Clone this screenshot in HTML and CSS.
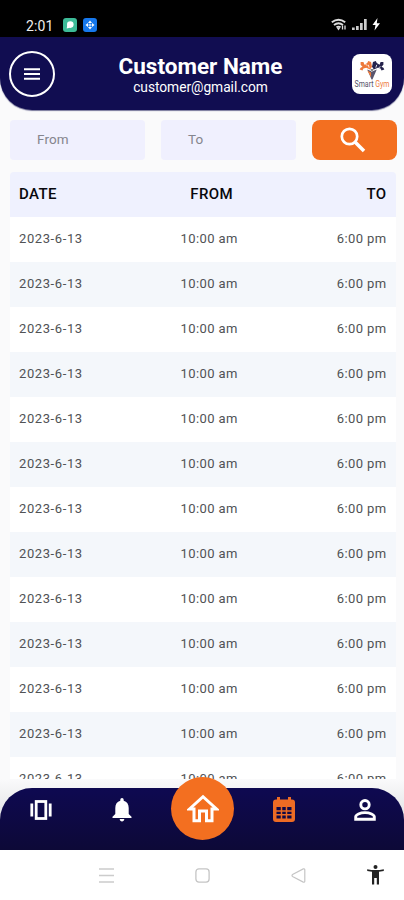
FILE: index.html
```html
<!DOCTYPE html>
<html lang="en">
<head>
<meta charset="utf-8">
<title>Attendance</title>
<link rel="stylesheet" href="styles.css">
</head>
<body>
<div class="phone">
  <div class="status">
    <span class="clock">2:01</span>
    <svg class="chip" viewBox="0 0 14 14"><rect width="14" height="14" rx="3" fill="#3dbb98"/><circle cx="7.3" cy="6.6" r="3.3" fill="#fff"/><path d="M4.3 7l-.6 3.4L7 9.8z" fill="#fff"/></svg>
    <svg class="chip" viewBox="0 0 14 14"><rect width="14" height="14" rx="3" fill="#1678ed"/><path d="M7 2.500L9 5H5zM7 11.500L5 9h4zM2.500 7L5 5v4zM11.500 7L9 9V5z" fill="#fff"/><circle cx="7" cy="7" r="1.600" fill="#a9d0ff"/></svg>
    <svg class="signals" viewBox="0 0 50 14">
      <g fill="none" stroke="#ddd" stroke-width="1.900"><path d="M.8 4.300Q7.500-.9 14.200 4.300M3 7Q7.500 3.500 12 7M5.500 9.300Q7.500 8 9.500 9.300"/></g>
      <path d="M5.500 9.500h4l-2 3z" fill="#ddd"/><path d="M11.500 7.500v4M14 7.500v4" stroke="#ddd" stroke-width="1.300"/>
      <path d="M21 9.500h2.700V12H21zM25 8h2.700v4H25zM29 5h2.700v7H29zM33 1h2.700v11H33z" fill="#ccc"/>
      <path d="M46.500 0L41.500 7h3l-1 5.500L49 5.300h-3.200z" fill="#fff"/>
    </svg>
  </div>
  <header class="header">
    <button class="menu" aria-label="Menu"><svg viewBox="0 0 16 12"><path d="M0 1.200h16M0 6h16M0 10.800h16" stroke="#fff" stroke-width="2"/></svg></button>
    <div class="customer"><h1>Customer Name</h1><p>customer@gmail.com</p></div>
    <div class="logo">
      <svg viewBox="0 0 30 20">
        <path d="M10 9l5 2 5-2-4.500 10.500h-1z" fill="#59566e"/>
        <path d="M3 1h3l1 3 3-2 1-2 3 1 1 5-2 3-4-2-3 1-1 2-3-1 1-2 2-1-2-2zM10 10l4 2v5z" fill="#ee7a3b"/>
        <path d="M27 1h-3l-1 3-3-2-1-2-3 1-1 5 2 3 4-2 3 1 1 2 3-1-1-2-2-1 2-2z" fill="#25234c"/>
        <path d="M8 3l2 2M11 4l1 3M20 4l-1 3M22 7l2-1M13 9l2 2 2-2" stroke="#fff" stroke-width=".9"/>
      </svg>
      <div class="brand">Smart <b>Gym</b></div>
    </div>
  </header>
  <main class="content">
    <form class="search">
      <div class="field">From</div><div class="field">To</div>
      <button type="button" class="go" aria-label="Search"><svg viewBox="0 0 26 26"><circle cx="9.500" cy="9.500" r="7.700" fill="none" stroke="#fff" stroke-width="2.700"/><path d="M15 15l9 9" stroke="#fff" stroke-width="3.600"/></svg></button>
    </form>
    <div class="table">
      <div class="row head"><span>DATE</span><span>FROM</span><span>TO</span></div>
      <div class="row"><span>2023-6-13</span><span>10:00 am</span><span>6:00 pm</span></div>
      <div class="row"><span>2023-6-13</span><span>10:00 am</span><span>6:00 pm</span></div>
      <div class="row"><span>2023-6-13</span><span>10:00 am</span><span>6:00 pm</span></div>
      <div class="row"><span>2023-6-13</span><span>10:00 am</span><span>6:00 pm</span></div>
      <div class="row"><span>2023-6-13</span><span>10:00 am</span><span>6:00 pm</span></div>
      <div class="row"><span>2023-6-13</span><span>10:00 am</span><span>6:00 pm</span></div>
      <div class="row"><span>2023-6-13</span><span>10:00 am</span><span>6:00 pm</span></div>
      <div class="row"><span>2023-6-13</span><span>10:00 am</span><span>6:00 pm</span></div>
      <div class="row"><span>2023-6-13</span><span>10:00 am</span><span>6:00 pm</span></div>
      <div class="row"><span>2023-6-13</span><span>10:00 am</span><span>6:00 pm</span></div>
      <div class="row"><span>2023-6-13</span><span>10:00 am</span><span>6:00 pm</span></div>
      <div class="row"><span>2023-6-13</span><span>10:00 am</span><span>6:00 pm</span></div>
      <div class="row"><span>2023-6-13</span><span>10:00 am</span><span>6:00 pm</span></div>
    </div>
  </main>
  <nav class="tabs">
    <a class="tab"><svg width="22" height="20" viewBox="0 0 22 20"><rect x="6.200" y="1.500" width="9.600" height="17" fill="none" stroke="#fff" stroke-width="2.800"/><path d="M1.800 3.500v13M20.200 3.500v13" stroke="#fff" stroke-width="2.800"/></svg></a>
    <a class="tab"><svg width="20" height="24" viewBox="0 0 20 24"><path d="M10 0c1 0 1.700.8 1.700 2v.8c3.300.8 5 3.700 5 7.200v6l2.800 2.700V20H.5v-1.300L3.300 16v-6c0-3.500 1.700-6.400 5-7.200V2c0-1.200.7-2 1.700-2zM7.700 21h4.600c0 1.400-1 2.500-2.300 2.500S7.700 22.400 7.700 21z" fill="#fff"/></svg></a>
    <a class="tab home"><svg width="32" height="30" viewBox="0 0 32 30"><path d="M2.500 15L16 2.700 29.500 15H25v11.800h-5.500V17h-7v9.800H7V15z" fill="none" stroke="#fff" stroke-width="3"/></svg></a>
    <a class="tab"><svg width="22" height="25" viewBox="0 0 22 25"><path fill-rule="evenodd" d="M3 2.500h1V0h3v2.500h8V0h3v2.500h1a3 3 0 0 1 3 3V22a3 3 0 0 1-3 3H3a3 3 0 0 1-3-3V5.500a3 3 0 0 1 3-3zM3.500 10v11.500h15V10z" fill="#ed6b24"/><path d="M8.500 10v12M13.500 10v12M3 13.900h16M3 17.800h16" stroke="#ed6b24" stroke-width="1.500"/></svg></a>
    <a class="tab"><svg width="22" height="22" viewBox="0 0 22 22"><g fill="none" stroke="#fff" stroke-width="2.900"><circle cx="11" cy="5.700" r="4.200"/><path d="M1.700 20.300v-2.500c0-2 4.300-4.200 9.300-4.200s9.300 2.200 9.300 4.200v2.500z"/></g></svg></a>
  </nav>
  <div class="system">
    <span><svg width="15" height="15" viewBox="0 0 15 15"><path d="M0 1h15M0 7.500h15M0 14h15" stroke="#ccc" stroke-width="1.500"/></svg></span>
    <span><svg width="15" height="15" viewBox="0 0 15 15"><rect x=".9" y=".9" width="13.200" height="13.200" rx="3" fill="none" stroke="#c5c5c5" stroke-width="1.300"/></svg></span>
    <span><svg width="15" height="15" viewBox="0 0 15 15"><path d="M1 7.500Q1 6.800 2 6.200L12.300.9q1.500-.5 1.500 1v11.200q0 1.500-1.500 1L2 8.800Q1 8.200 1 7.500z" fill="none" stroke="#c5c5c5" stroke-width="1.200"/></svg></span>
    <span><svg width="17" height="20" viewBox="0 0 17 20"><circle cx="8.500" cy="2" r="2" fill="#222"/><path d="M.2 4.200Q8.500 6 16.800 4.200v1.700l-4.800.8V19.500h-2.200V13H7.200v6.500H5V6.700L.2 5.900z" fill="#222"/></svg></span>
  </div>
</div>
</body>
</html>
```
FILE: styles.css
```css
* { box-sizing: border-box; }
body { margin: 0; font-family: Roboto, "Liberation Sans", sans-serif; }
h1, p { margin: 0; }
button { padding: 0; border: 0; }
svg { display: block; }
.phone { width: 404px; height: 900px; overflow: hidden; display: flex; flex-direction: column; background: #fafafb; }
.status { flex: 0 0 37px; display: flex; align-items: center; padding: 13px 23px 0 26px; background: #000; color: #eee; }
.clock { width: 37px; padding-top: 1px; font-size: 14px; line-height: 16px; letter-spacing: .1px; }
.chip { width: 14px; height: 14px; margin-right: 6px; }
.signals { width: 50px; height: 14px; margin-left: auto; }
.header { flex: 0 0 73px; display: flex; align-items: center; justify-content: space-between; padding: 0 12px 0 9px; background: #110d51; border-radius: 0 0 32px 32px; box-shadow: 0 1px 1px #77779b; }
.menu { width: 46px; height: 46px; display: grid; place-items: center; background: none; border: 2px solid #fff; border-radius: 50%; }
.menu svg { width: 16px; height: 12px; }
.customer { padding-top: 2px; color: #fff; text-align: center; white-space: nowrap; transform: translateX(-3px); }
.customer h1 { font-size: 22.5px; line-height: 25px; font-weight: 700; }
.customer p { font-size: 13.8px; line-height: 16px; letter-spacing: -.05px; }
.logo { width: 40px; height: 40px; padding-top: 7px; border-radius: 8px; background: #fff; overflow: hidden; }
.logo svg { width: 30px; height: 19px; margin: 0 auto; }
.brand { font-size: 7px; line-height: 8px; text-align: center; color: #55536a; white-space: nowrap; transform: scaleY(1.25); }
.brand b { font-weight: 400; color: #ee7a3b; }
.content { flex: 0 0 669px; height: 669px; padding: 10px 8px 0 10px; overflow: hidden; }
.search { display: grid; grid-template-columns: 135px 135px 85px; column-gap: 16px; height: 40px; margin-bottom: 12px; }
.field { padding-left: 27px; border-radius: 4px; background: #f0f0fe; color: #85858d; font-size: 13.5px; line-height: 39px; letter-spacing: .1px; }
.go { display: grid; place-items: center; border-radius: 8px; background: #f36f20; }
.go svg { width: 26px; height: 26px; margin-left: -3px; margin-top: -1px; }
.table { border-radius: 4px; overflow: hidden; }
.row { display: grid; grid-template-columns: 1fr 1fr 1fr; height: 45px; padding: 0 9.500px 2px 9px; align-items: center; background: #fff; color: #505255; font-size: 13px; letter-spacing: .6px; }
.row span:nth-child(2) { text-align: center; padding-left: 13px; letter-spacing: .4px; }
.row span:nth-child(3) { text-align: right; letter-spacing: .4px; }
.row:nth-child(odd) { background: #f4f7fb; }
.row.head { background: #eff1fe; color: #08080c; font-size: 15px; font-weight: 500; letter-spacing: .4px; }
.row.head span:nth-child(2) { padding-left: 18px; }
.tabs { position: relative; flex: 0 0 71px; display: grid; grid-template-columns: repeat(5, 81px); justify-content: center; padding-top: 8px; padding-left: 1px; background: linear-gradient(#fff0, #e4e5e8 50%); isolation: isolate; }
.tabs::before { content: ""; position: absolute; inset: 9px 0 0; z-index: -1; border-radius: 32px 32px 0 0; background: linear-gradient(#0e0951, #0d0937); }
.tab { height: 45px; display: grid; place-items: center; }
.home { justify-self: center; width: 63px; height: 63px; margin-top: -10px; border-radius: 50%; background: #f36f20; }
.system { flex: 1; display: grid; grid-template-columns: 96px 96px 96px 58px; padding-left: 58px; align-items: center; justify-items: center; background: #fff; }
```
